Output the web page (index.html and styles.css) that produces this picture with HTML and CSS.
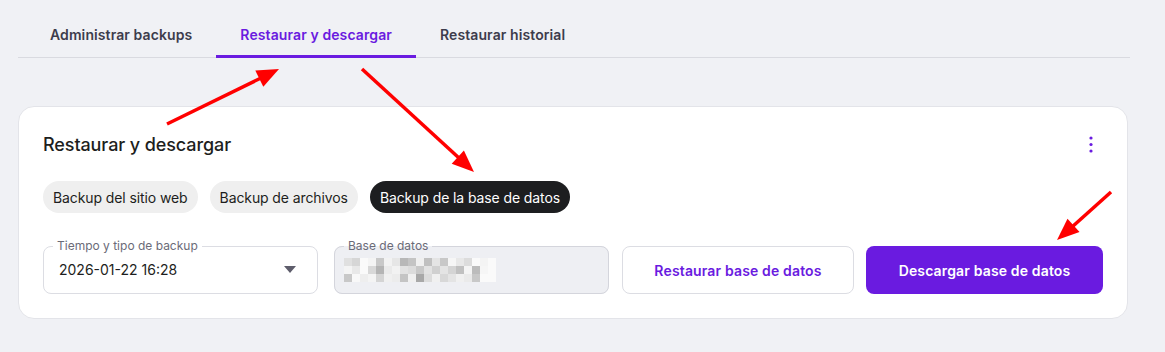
FILE: index.html
```html
<!DOCTYPE html>
<html lang="es">
<head>
    <meta charset="UTF-8">
    <title>Restaurar y descargar</title>
    <link rel="stylesheet" href="styles.css">
</head>
<body>
    <div class="page">
        <nav class="tabs">
            <a class="tab">Administrar backups</a>
            <a class="tab active">Restaurar y descargar</a>
            <a class="tab">Restaurar historial</a>
        </nav>

        <section class="card">
            <div class="card-head">
                <h2>Restaurar y descargar</h2>
                <button class="kebab" aria-label="Más opciones">
                    <svg width="4" height="17" viewBox="0 0 4 17"><circle cx="2" cy="2" r="1.6"/><circle cx="2" cy="8.5" r="1.6"/><circle cx="2" cy="15" r="1.6"/></svg>
                </button>
            </div>

            <div class="chips">
                <span class="chip">Backup del sitio web</span>
                <span class="chip">Backup de archivos</span>
                <span class="chip active">Backup de la base de datos</span>
            </div>

            <div class="fields">
                <fieldset class="field select">
                    <legend>Tiempo y tipo de backup</legend>
                    <span class="value">2026-01-22 16:28</span>
                    <span class="caret"></span>
                </fieldset>
                <fieldset class="field disabled">
                    <legend>Base de datos</legend>
                    <svg class="blurred" width="152" height="24" viewBox="0 0 152 24">
                        <g id="pix"></g>
                    </svg>
                </fieldset>
                <button class="btn btn-outline">Restaurar base de datos</button>
                <button class="btn btn-primary">Descargar base de datos</button>
            </div>
        </section>
    </div>

    <!-- annotation arrows over the screenshot -->
    <svg class="arrows" width="1165" height="352" viewBox="0 0 1165 352">
        <g stroke="#ff0000" stroke-width="3.5" stroke-linecap="butt">
            <line x1="167" y1="124" x2="261" y2="78"/>
            <line x1="362" y1="69" x2="459" y2="158"/>
            <line x1="1111" y1="192" x2="1072" y2="227"/>
        </g>
        <g fill="#ff0000">
            <polygon points="279,69 263.3,86.8 255.3,70.6"/>
            <polygon points="474,172 451.7,163.7 463.9,150.5"/>
            <polygon points="1057,240 1079.5,232.1 1067.5,218.7"/>
        </g>
    </svg>

    <script>
        // pixelated (censored) database name
        const rows = [
            ['e0','d6','fa','f4','c8','f2','e6','b8','c4','f0','c0','e4','c8','f6','e8','dc','fa','f4','fa'],
            ['f4','e8','fa','d8','b4','ea','f2','e2','dc','c8','e2','d0','e4','d4','c0','f4','bc','f6','fa'],
            ['c8','f8','ee','f4','d4','f0','ec','c4','f0','a8','dc','f0','d8','e4','f0','ea','c8','fa','fa']
        ];
        const pix = document.getElementById('pix');
        rows.forEach((row, r) => {
            row.forEach((shade, c) => {
                const rect = document.createElementNS('http://www.w3.org/2000/svg', 'rect');
                rect.setAttribute('x', c * 8);
                rect.setAttribute('y', r * 8);
                rect.setAttribute('width', 8);
                rect.setAttribute('height', 8);
                rect.setAttribute('fill', '#' + shade + shade + shade);
                pix.appendChild(rect);
            });
        });
    </script>
</body>
</html>
```

FILE: styles.css
```css
:root {
    --bg: #f0f1f5;
    --purple: #6a1be0;
    --text-dark: #1d1e20;
    --text-tab: #3d3c4c;
    --text-muted: #6b6b78;
    --line: #d9dae0;
    --border: #dcdde3;
    --chip-bg: #efefef;
}

* {
    box-sizing: border-box;
}

body {
    margin: 0;
    background: var(--bg);
    font-family: 'Inter', 'Noto Sans', sans-serif;
    color: var(--text-dark);
    position: relative;
    width: 1165px;
    height: 352px;
    overflow: hidden;
}

.page {
    padding: 10px 0 0 18px;
}

/* tabs */
.tabs {
    width: 1112px;
    display: flex;
    padding-left: 8px;
    border-bottom: 1px solid var(--line);
}

.tab {
    height: 48px;
    display: flex;
    align-items: center;
    padding: 3px 24px 0;
    font-size: 14px;
    font-weight: 600;
    letter-spacing: 0.1px;
    color: var(--text-tab);
    margin-bottom: -1px;
    border-bottom: 3px solid transparent;
}

.tab.active {
    color: var(--purple);
    border-bottom-color: var(--purple);
}

/* card */
.card {
    width: 1110px;
    margin-top: 48px;
    background: #ffffff;
    border: 1px solid #e3e4e9;
    border-radius: 16px;
    padding: 25px 24px 24px;
}

.card-head {
    display: flex;
    align-items: center;
    justify-content: space-between;
    height: 24px;
}

.card-head h2 {
    margin: 0;
    font-size: 18px;
    font-weight: 500;
    letter-spacing: -0.1px;
}

.kebab {
    width: 24px;
    height: 24px;
    border: none;
    background: none;
    padding: 0;
    display: flex;
    align-items: center;
    justify-content: center;
    fill: var(--purple);
}

.chips {
    display: flex;
    gap: 12px;
    margin-top: 25px;
}

.chip {
    height: 32px;
    padding: 0 10px;
    border-radius: 16px;
    background: var(--chip-bg);
    font-size: 14px;
    letter-spacing: -0.1px;
    display: flex;
    align-items: center;
    color: var(--text-dark);
}

.chip.active {
    background: #1d1e20;
    color: #ffffff;
}

/* fields row */
.fields {
    display: flex;
    align-items: flex-end;
    margin-top: 26px;
}

.field {
    margin: 0;
    width: 275px;
    height: 55px;
    border: 1px solid var(--border);
    border-radius: 8px;
    padding: 0 16px 0 15px;
    display: flex;
    align-items: center;
    position: relative;
}

.field legend {
    font-size: 12px;
    color: var(--text-muted);
    padding: 0 4px;
    margin-left: -6px;
    line-height: 14px;
}

.field .value {
    font-size: 14px;
    color: var(--text-dark);
    flex: 1;
    margin-top: -7px;
}

.caret {
    width: 0;
    height: 0;
    border-left: 6px solid transparent;
    border-right: 6px solid transparent;
    border-top: 7px solid #5e5d6b;
    margin-right: 5px;
    margin-top: -7px;
}

.field.disabled {
    margin-left: 16px;
    background: #eeeff3;
    border-color: #d4d5dc;
}

.blurred {
    margin-top: -7px;
    margin-left: -6px;
}

.btn {
    height: 48px;
    border-radius: 8px;
    font-family: inherit;
    font-size: 14px;
    font-weight: 600;
    letter-spacing: 0.15px;
    cursor: pointer;
}

.btn-outline {
    width: 232px;
    margin-left: 13px;
    background: #ffffff;
    border: 1px solid var(--border);
    color: var(--purple);
}

.btn-primary {
    width: 237px;
    margin-left: 12px;
    background: var(--purple);
    border: none;
    color: #ffffff;
}

/* annotation overlay */
.arrows {
    position: absolute;
    top: 0;
    left: 0;
    pointer-events: none;
}
```
